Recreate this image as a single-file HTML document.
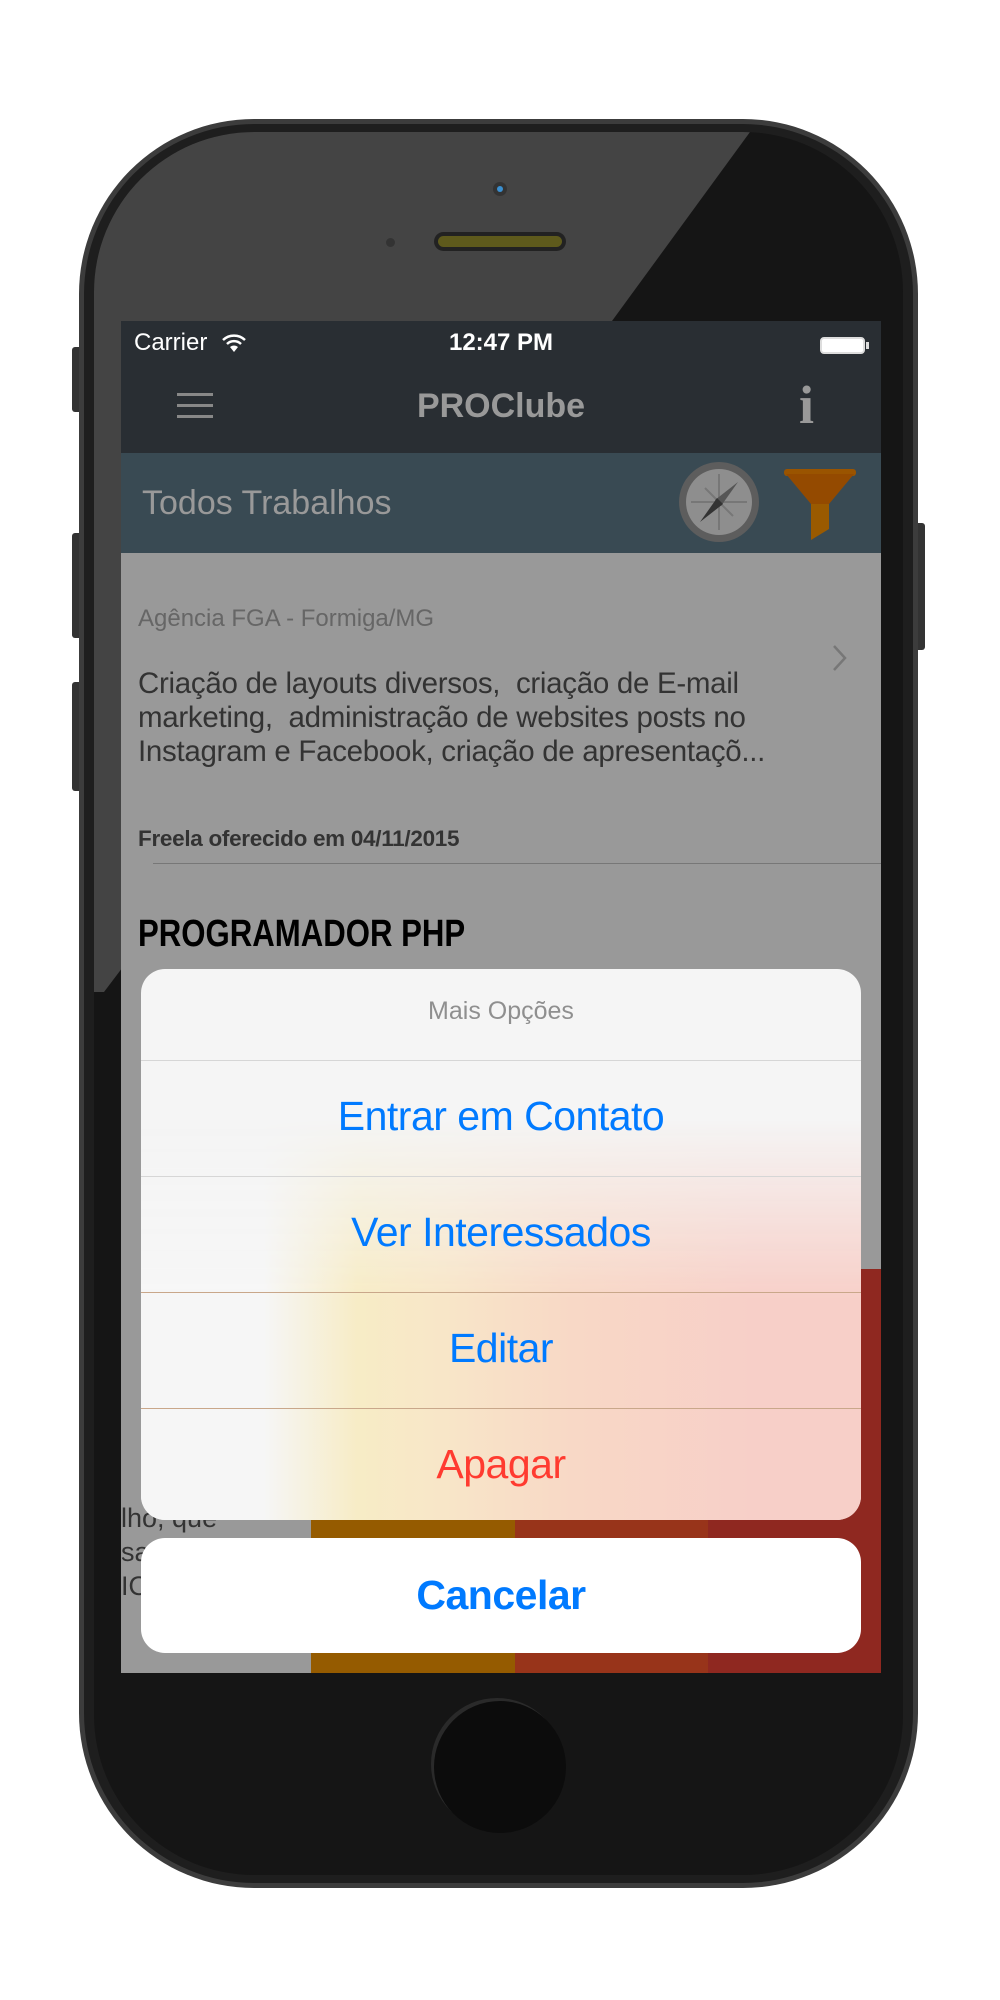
<!DOCTYPE html>
<html><head><meta charset="utf-8"><style>
*{margin:0;padding:0;box-sizing:border-box}
body{width:1000px;height:2000px;background:#fff;position:relative;overflow:hidden;font-family:"Liberation Sans",sans-serif}
.a{position:absolute}
.c{display:inline-block;transform-origin:left center}
</style></head><body>
<div class="a" style="left:72px;top:347px;width:10px;height:65px;background:#333;border-radius:3px"></div>
<div class="a" style="left:72px;top:533px;width:10px;height:105px;background:#333;border-radius:3px"></div>
<div class="a" style="left:72px;top:682px;width:10px;height:109px;background:#333;border-radius:3px"></div>
<div class="a" style="left:915px;top:523px;width:10px;height:127px;background:#333;border-radius:3px"></div>
<div class="a" style="left:79px;top:119px;width:839px;height:1769px;background:#3c3c3c;border-radius:175px"></div>
<div class="a" style="left:84px;top:124px;width:829px;height:1759px;background:#1e1e1e;border-radius:170px"></div>
<div class="a" style="left:94px;top:132px;width:809px;height:1743px;background:#151515;border-radius:160px;overflow:hidden">
  <div class="a" style="left:0;top:0;width:809px;height:1743px;background:#444;clip-path:polygon(0 0,656px 0,518px 189px,10px 860px,0 860px)"></div>
</div>
<div class="a" style="left:493px;top:182px;width:14px;height:14px;border-radius:50%;background:#333"></div>
<div class="a" style="left:497px;top:186px;width:6px;height:6px;border-radius:50%;background:#3a8fd0"></div>
<div class="a" style="left:386px;top:238px;width:9px;height:9px;border-radius:50%;background:#333"></div>
<div class="a" style="left:434px;top:232px;width:132px;height:19px;border-radius:10px;background:#222"></div>
<div class="a" style="left:438px;top:236px;width:124px;height:11px;border-radius:6px;background:#5e5a1c"></div>
<div class="a" style="left:121px;top:321px;width:760px;height:1352px;background:#999;overflow:hidden">
  <div class="a" style="left:0;top:0;width:760px;height:132px;background:#292e33"></div>
  <div class="a" style="left:13px;top:8px;color:#fff;font-size:24px">Carrier</div>
  <svg class="a" style="left:100px;top:12px" width="26" height="20" viewBox="0 0 26 20"><path d="M2 7 A16 16 0 0 1 24 7" stroke="#fff" stroke-width="2.5" fill="none"/><path d="M6 11 A10 10 0 0 1 20 11" stroke="#fff" stroke-width="2.5" fill="none"/><path d="M9 14 L13 19 L17 14 A6 6 0 0 0 9 14Z" fill="#fff"/></svg>
  <div class="a" style="left:0;width:760px;top:8px;text-align:center;color:#fff;font-size:24px;font-weight:bold">12:47 PM</div>
  <div class="a" style="left:699px;top:16px;width:45px;height:17px;border:2px solid #ddd;border-radius:4px;background:#fff"></div>
  <div class="a" style="left:745px;top:21px;width:3px;height:7px;background:#ddd"></div>
  <div class="a" style="left:56px;top:72px;width:36px;height:3px;background:#888;box-shadow:0 11px 0 #888,0 22px 0 #888"></div>
  <div class="a" style="left:0;width:760px;top:66px;text-align:center;color:#999;font-size:34px;font-weight:bold">PROClube</div>
  <div class="a" style="left:678px;top:53px;color:#999;font-size:54px;font-weight:bold;font-family:'Liberation Serif',serif">i</div>
  <div class="a" style="left:0;top:132px;width:760px;height:100px;background:#394a53"></div>
  <div class="a" style="left:21px;top:163px;color:#999;font-size:34px">Todos Trabalhos</div>
  <svg class="a" style="left:556px;top:139px" width="90" height="90" viewBox="0 0 90 90"><circle cx="42" cy="42" r="40" fill="#5d5d5d"/><circle cx="42" cy="42" r="33" fill="#8e8e8e"/><path d="M42 14V70M14 42H70M28 28L56 56" stroke="#777" stroke-width="2"/><path d="M61 22L44 46 38 40Z" fill="#555"/><path d="M23 62L40 38 46 44Z" fill="#333"/></svg>
  <svg class="a" style="left:660px;top:145px" width="80" height="80" viewBox="0 0 80 80"><rect x="3" y="3" width="72" height="7" rx="3" fill="#9a5400"/><path d="M5 8H73L48 38H30Z" fill="#944a00"/><path d="M30 38H48V63L30 74Z" fill="#9a5a00"/></svg>
  <div class="a" style="left:17px;top:284px;color:#666;font-size:24px">Agência FGA - Formiga/MG</div>
  <svg class="a" style="left:711px;top:323px" width="16" height="28" viewBox="0 0 16 28"><path d="M2 2L13 14 2 26" stroke="#777" stroke-width="2.5" fill="none"/></svg>
  <div class="a" style="left:17px;top:346px;color:#333;font-size:29.5px;line-height:34px;letter-spacing:-0.3px;white-space:nowrap">Criação de layouts diversos,&nbsp; criação de E-mail<br>marketing,&nbsp; administração de websites posts no<br>Instagram e Facebook, criação de apresentaçõ...</div>
  <div class="a" style="left:17px;top:505px;color:#333;font-size:22.5px;font-weight:bold;letter-spacing:-0.3px">Freela oferecido em 04/11/2015</div>
  <div class="a" style="left:32px;top:542px;width:728px;height:1px;background:#777"></div>
  <div class="a" style="left:17px;top:592px;color:#000;font-size:38px;font-weight:bold;white-space:nowrap"><span class="c" style="transform:scaleX(0.82)">PROGRAMADOR PHP</span></div>
  <div class="a" style="left:0px;top:1180px;color:#333;font-size:27px;line-height:34px;white-space:nowrap">lho, que<br>sa<br>IO</div>
  <div class="a" style="left:190px;top:948px;width:204px;height:404px;background:#955b00"></div>
  <div class="a" style="left:394px;top:948px;width:193px;height:404px;background:#98341a"></div>
  <div class="a" style="left:587px;top:948px;width:173px;height:404px;background:#8f2820"></div>
</div>
<div class="a" style="left:141px;top:969px;width:720px;height:551px;border-radius:24px;overflow:hidden;background:#f5f5f5">
  <div class="a" style="left:0;top:150px;width:720px;height:401px;background:linear-gradient(90deg,#f6f6f6 0%,#f6f6f6 17%,#f7ecc6 30%,#f8e6c8 42%,#f8d8c6 60%,#f7cfc8 85%,#f7cfc8 100%);-webkit-mask-image:linear-gradient(180deg,rgba(0,0,0,0) 0%,#000 45%);mask-image:linear-gradient(180deg,rgba(0,0,0,0) 0%,#000 45%)"></div>
  <div class="a" style="left:0;width:720px;top:28px;text-align:center;color:#8f8f8f;font-size:25px">Mais Opções</div>
  <div class="a" style="left:0;top:91px;width:720px;height:1px;background:#d6d6d6"></div>
  <div class="a" style="left:0;top:207px;width:720px;height:1px;background:#d6d6d6"></div>
  <div class="a" style="left:0;top:323px;width:720px;height:1px;background:#c9a78a"></div>
  <div class="a" style="left:0;top:439px;width:720px;height:1px;background:#c9a78a"></div>
  <div class="a" style="left:0;width:720px;top:124px;text-align:center;color:#007aff;font-size:41px;letter-spacing:-0.5px">Entrar em Contato</div>
  <div class="a" style="left:0;width:720px;top:240px;text-align:center;color:#007aff;font-size:41px;letter-spacing:-0.5px">Ver Interessados</div>
  <div class="a" style="left:0;width:720px;top:356px;text-align:center;color:#007aff;font-size:41px;letter-spacing:-0.5px">Editar</div>
  <div class="a" style="left:0;width:720px;top:472px;text-align:center;color:#ff3b30;font-size:41px;letter-spacing:-0.5px">Apagar</div>
</div>
<div class="a" style="left:141px;top:1538px;width:720px;height:115px;border-radius:24px;background:#fff"></div>
<div class="a" style="left:141px;width:720px;top:1572px;text-align:center;color:#007aff;font-size:41px;font-weight:bold;letter-spacing:-0.5px">Cancelar</div>
<div class="a" style="left:434px;top:1701px;width:132px;height:132px;border-radius:50%;background:#0c0c0c;box-shadow:-3px -3px 0 #2a2a2a"></div>
</body></html>
